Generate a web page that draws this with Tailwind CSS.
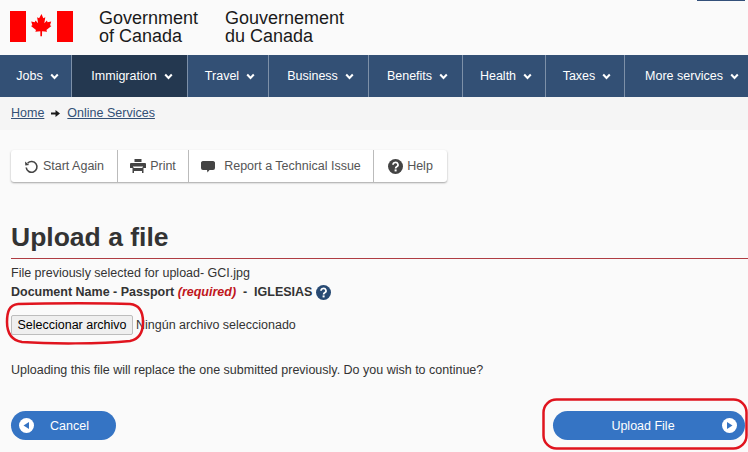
<!DOCTYPE html>
<html lang="en">
<head>
    <meta charset="UTF-8">
    <title>Upload a file</title>
    <script src="https://cdn.jsdelivr.net/npm/@tailwindcss/browser@4"></script>
</head>
<body class="relative w-[748px] h-[452px] overflow-hidden bg-[#fafafa] font-['Liberation_Sans',Arial,sans-serif] text-[#333]">
    <!-- cut off link at the top right -->
    <div class="absolute left-[697px] top-0 w-[48px] h-px bg-[#33507a]"></div>

    <!-- Header -->
    <header class="h-[55px] flex items-start pl-[10px] pt-[11px]">
        <svg class="w-[63px] h-[32px] shrink-0" viewBox="0 0 63 32">
            <rect width="16" height="31" fill="#f00"/>
            <rect x="47" width="16" height="31" fill="#f00"/>
            <path d="M31.5 3l-2.4 4.2-2-1 1 6-2.6-2.7-.7 1.7-3.6-.6 1.2 3.6-1.4.7 5 4-.7 1.9 5-.6.1 5h1.6l.1-5 5 .6-.7-1.9 5-4-1.4-.7 1.2-3.6-3.6.6-.7-1.700-2.600 2.700 1-6-2 1z" fill="#f00"/>
        </svg>
        <div class="ml-[26px] -mt-[2px] text-[18px] leading-[18px] text-[#1a1a1a] w-[126px]">Government<br>of Canada</div>
        <div class="text-[18px] -mt-[2px] leading-[18px] text-[#1a1a1a]">Gouvernement<br>du Canada</div>
    </header>

    <!-- Nav -->
    <nav class="h-[42px] flex bg-[#335075] text-white text-[12.5px]">
        <a class="w-[72px] flex items-center justify-center gap-[7px] border-r border-[#7d90a8] pl-[4px]">Jobs <svg class="w-[9px] h-[7px]" viewBox="0 0 9 7"><path d="M1.200 1.500L4.500 5l3.300-3.500" fill="none" stroke="#fff" stroke-width="2"/></svg></a>
        <a class="w-[116px] flex items-center justify-center gap-[7px] border-r border-[#7d90a8] bg-[#243850] pl-[5px]">Immigration <svg class="w-[9px] h-[7px]" viewBox="0 0 9 7"><path d="M1.200 1.500L4.500 5l3.300-3.500" fill="none" stroke="#fff" stroke-width="2"/></svg></a>
        <a class="w-[81px] flex items-center justify-center gap-[7px] border-r border-[#7d90a8] pl-[4px]">Travel <svg class="w-[9px] h-[7px]" viewBox="0 0 9 7"><path d="M1.200 1.500L4.500 5l3.300-3.500" fill="none" stroke="#fff" stroke-width="2"/></svg></a>
        <a class="w-[100px] flex items-center justify-center gap-[7px] border-r border-[#7d90a8] pl-[4px]">Business <svg class="w-[9px] h-[7px]" viewBox="0 0 9 7"><path d="M1.200 1.500L4.500 5l3.300-3.500" fill="none" stroke="#fff" stroke-width="2"/></svg></a>
        <a class="w-[94px] flex items-center justify-center gap-[7px] border-r border-[#7d90a8] pl-[4px]">Benefits <svg class="w-[9px] h-[7px]" viewBox="0 0 9 7"><path d="M1.200 1.500L4.500 5l3.300-3.500" fill="none" stroke="#fff" stroke-width="2"/></svg></a>
        <a class="w-[83px] flex items-center justify-center gap-[7px] border-r border-[#7d90a8] pl-[4px]">Health <svg class="w-[9px] h-[7px]" viewBox="0 0 9 7"><path d="M1.200 1.500L4.500 5l3.300-3.500" fill="none" stroke="#fff" stroke-width="2"/></svg></a>
        <a class="w-[79px] flex items-center justify-center gap-[7px] border-r border-[#7d90a8] pl-[4px]">Taxes <svg class="w-[9px] h-[7px]" viewBox="0 0 9 7"><path d="M1.200 1.500L4.500 5l3.300-3.500" fill="none" stroke="#fff" stroke-width="2"/></svg></a>
        <a class="flex-1 flex items-center justify-center gap-[7px] pl-[11px]">More services <svg class="w-[9px] h-[7px]" viewBox="0 0 9 7"><path d="M1.200 1.500L4.500 5l3.300-3.500" fill="none" stroke="#fff" stroke-width="2"/></svg></a>
    </nav>

    <!-- Breadcrumb -->
    <div class="h-[33px] bg-[#f5f5f5] pl-[11px] flex items-center text-[12.5px] text-[#335075]">
        <a class="underline">Home</a>
        <svg class="w-[9px] h-[7px] mx-[7px]" viewBox="0 0 9 7"><path d="M0 2.500h4.500V0L9 3.500 4.500 7V4.500H0z" fill="#1a1a1a"/></svg>
        <a class="underline">Online Services</a>
    </div>

    <main class="pl-[11px] pr-[3px]">
        <!-- Toolbar -->
        <div class="mt-[20px] flex w-fit h-[32px] text-[12.5px] text-[#555] rounded-[3px] shadow-[0_1px_2px_rgba(0,0,0,0.35)] bg-white">
            <div class="w-[107px] flex items-center justify-center gap-[4px] border-r border-[#bbb]">
                <svg class="w-[15px] h-[15px]" viewBox="0 0 15 15"><path d="M3.600 4.200A5.400 5.400 0 1 1 2.200 8.500" fill="none" stroke="#444" stroke-width="1.600"/><path d="M1 2.600l.3 4 3.900-.7z" fill="#444"/></svg>
                Start Again
            </div>
            <div class="w-[71px] flex items-center justify-center gap-[4px] border-r border-[#bbb]">
                <svg class="w-[16px] h-[14px]" viewBox="0 0 16 14"><path d="M4.500 0h7v3h-7zM1 4h14a1 1 0 0 1 1 1v4h-3V7.500H3V9H0V5a1 1 0 0 1 1-1zM4 9h8v3H4zM2.500 8.500h1.500v5.500h8V8.500h1.500v5.500h-11z" fill="#444"/></svg>
                Print
            </div>
            <div class="w-[185px] flex items-center justify-center gap-[9px] border-r border-[#bbb]">
                <svg class="w-[14px] h-[13px]" viewBox="0 0 14 13"><path d="M2 1h10a2 2 0 0 1 2 1.500v5.500a2 2 0 0 1-2 2H8.500L6.500 12.500 6 10H2a2 2 0 0 1-2-2V2.500A2 2 0 0 1 2 1z" fill="#444"/></svg>
                Report a Technical Issue
            </div>
            <div class="w-[73px] flex items-center justify-center gap-[4px]">
                <svg class="w-[15px] h-[15px]" viewBox="0 0 15 15"><circle cx="7.500" cy="7.500" r="7.500" fill="#444"/><path d="M5 5.800a2.500 2.300 0 1 1 3.700 2c-.8.500-1.100.8-1.100 1.600" fill="none" stroke="#fff" stroke-width="1.700"/><rect x="6.600" y="10.400" width="2" height="2" fill="#fff"/></svg>
                Help
            </div>
        </div>

        <!-- Title -->
        <h1 class="mt-[38px] text-[26.500px] leading-[34px] font-bold text-[#333]">Upload a file</h1>
        <div class="mt-[4px] -mr-[3px] h-px bg-[#af3c43]"></div>

        <p class="mt-[7px] text-[12.500px] leading-[15px] text-[#333]">File previously selected for upload- GCI.jpg</p>
        <p class="mt-[2px] flex items-center text-[12.500px] leading-[18px] font-bold text-[#333] whitespace-pre">Document Name - Passport <i class="text-[#c0151b]">(required)</i>  -  IGLESIAS <svg class="w-[15px] h-[15px]" viewBox="0 0 15 15"><circle cx="7.500" cy="7.500" r="7.500" fill="#284a73"/><path d="M5 5.800a2.500 2.300 0 1 1 3.700 2c-.8.500-1.100.8-1.100 1.600" fill="none" stroke="#fff" stroke-width="1.700"/><rect x="6.600" y="10.400" width="2" height="2" fill="#fff"/></svg></p>

        <div class="mt-[14px] flex items-center text-[12.500px] text-[#333]">
            <button class="w-[122px] h-[20px] bg-[#efefef] border border-[#bdbdbd] rounded-[2px] text-[12.500px] text-black">Seleccionar archivo</button>
            <span class="ml-[3px]">Ningún archivo seleccionado</span>
        </div>

        <p class="mt-[28px] text-[12.500px] leading-[15px] text-[#333]">Uploading this file will replace the one submitted previously. Do you wish to continue?</p>

        <!-- Actions -->
        <div class="mt-[33px] flex justify-between">
            <a class="w-[105px] h-[29px] rounded-full bg-[#3574c4] text-white text-[12.500px] flex items-center pl-[8px]">
                <svg class="w-[15px] h-[15px]" viewBox="0 0 15 15"><circle cx="7.500" cy="7.500" r="7.500" fill="#fff"/><path d="M10 4v7L4.500 7.500z" fill="#3574c4"/></svg>
                <span class="ml-[16px] pt-px">Cancel</span>
            </a>
            <a class="w-[192px] h-[29px] rounded-full bg-[#3574c4] text-white text-[12.500px] flex items-center justify-center relative pr-[12px] pt-px">
                Upload File
                <svg class="absolute right-[8px] top-[7px] w-[15px] h-[15px]" viewBox="0 0 15 15"><circle cx="7.500" cy="7.500" r="7.500" fill="#fff"/><path d="M5 4v7l5.500-3.500z" fill="#3574c4"/></svg>
            </a>
        </div>
    </main>

    <!-- red marks drawn over the screenshot -->
    <svg class="absolute left-0 top-0 w-[748px] h-[452px] pointer-events-none" viewBox="0 0 748 452" fill="none" stroke="#e0141e" stroke-width="2.500">
        <path d="M18 304C50 303 110 303 130 304C141 305 143 314 143 322C143 332 140 339 130 341C100 344 50 344 22 342C10 340 7 332 7 322C7 312 9 305 18 304"/>
        <rect x="543.500" y="399.500" width="203" height="49" rx="13"/>
    </svg>
</body>
</html>
